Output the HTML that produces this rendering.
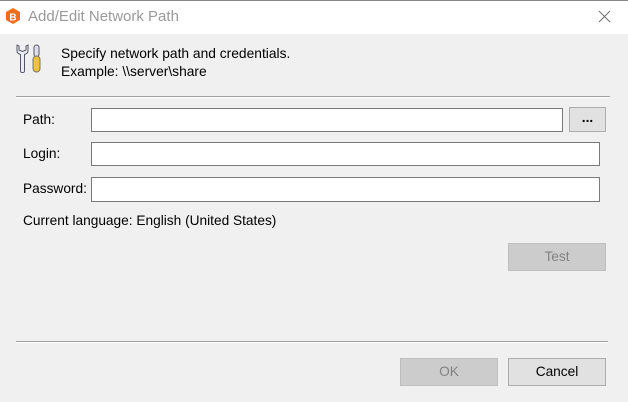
<!DOCTYPE html>
<html><head><style>
body{margin:0;width:628px;height:402px;overflow:hidden;background:#f0f0f0;font-family:"Liberation Sans",sans-serif;font-size:13.7px;color:#000;position:relative}
.a{position:absolute}
.title{left:0;top:0;width:628px;height:33px;background:#fff;border-top:1px solid #888}
.inp{position:absolute;background:#fff;border:1px solid #7a7a7a;box-sizing:border-box}
.btn{position:absolute;box-sizing:border-box;border:1px solid #adadad;background:#e1e1e1;text-align:center;font-size:13.7px}
.dis{background:#ccc;border-color:#bfbfbf;color:#838383}
.sep{position:absolute;height:1px;background:#a0a0a0;border-bottom:1px solid #fff}
</style></head><body>
<div class="a title"></div>
<svg class="a" style="left:4px;top:7px" width="18" height="18" viewBox="0 0 18 18"><polygon points="9,1 16,5 16,13 9,17 2,13 2,5" fill="#f26b21"/><text x="9" y="13.5" font-size="10" font-weight="bold" fill="#fff" text-anchor="middle" font-family="Liberation Sans">B</text></svg>
<div class="a" style="left:28px;top:8px;font-size:15px;color:#9a9a9a">Add/Edit Network Path</div>
<svg class="a" style="left:598px;top:10px" width="13" height="13"><path d="M1 1L12 12M12 1L1 12" stroke="#777" stroke-width="1.1"/></svg>
<svg class="a" style="left:15px;top:43px" width="32" height="32" viewBox="0 0 32 32">
<path d="M2 2v6c0 2 2 3 3.5 3.5V28c0 2 4 2 4 0V11.5c1.5-.5 3.5-1.5 3.5-3.5V2l-2 1v4l-3.5 1.5L4 7V3z" fill="#e8eef3" stroke="#556" stroke-width="1"/>
<rect x="19" y="2" width="5" height="12" rx="2.5" fill="#dde" stroke="#556"/>
<rect x="18" y="13" width="7" height="16" rx="3.5" fill="#f0c040" stroke="#776" />
</svg>
<div class="a" style="left:61px;top:45px;font-size:13.8px;line-height:18px">Specify network path and credentials.<br>Example: \\server\share</div>
<div class="sep" style="left:16px;top:96px;width:594px"></div>
<div class="a" style="left:23px;top:112px">Path:</div>
<div class="inp" style="left:91px;top:108px;width:472px;height:24px"></div>
<div class="btn" style="left:569px;top:107px;width:37px;height:25px;line-height:20px;font-weight:bold">...</div>
<div class="a" style="left:23px;top:146px">Login:</div>
<div class="inp" style="left:91px;top:142px;width:509px;height:24px"></div>
<div class="a" style="left:23px;top:181px">Password:</div>
<div class="inp" style="left:91px;top:177px;width:509px;height:25px"></div>
<div class="a" style="left:23px;top:213px">Current language: English (United States)</div>
<div class="btn dis" style="left:508px;top:243px;width:98px;height:28px;line-height:26px">Test</div>
<div class="sep" style="left:16px;top:341px;width:592px"></div>
<div class="btn dis" style="left:400px;top:358px;width:98px;height:28px;line-height:26px">OK</div>
<div class="btn" style="left:508px;top:358px;width:98px;height:28px;line-height:26px">Cancel</div>
</body></html>
